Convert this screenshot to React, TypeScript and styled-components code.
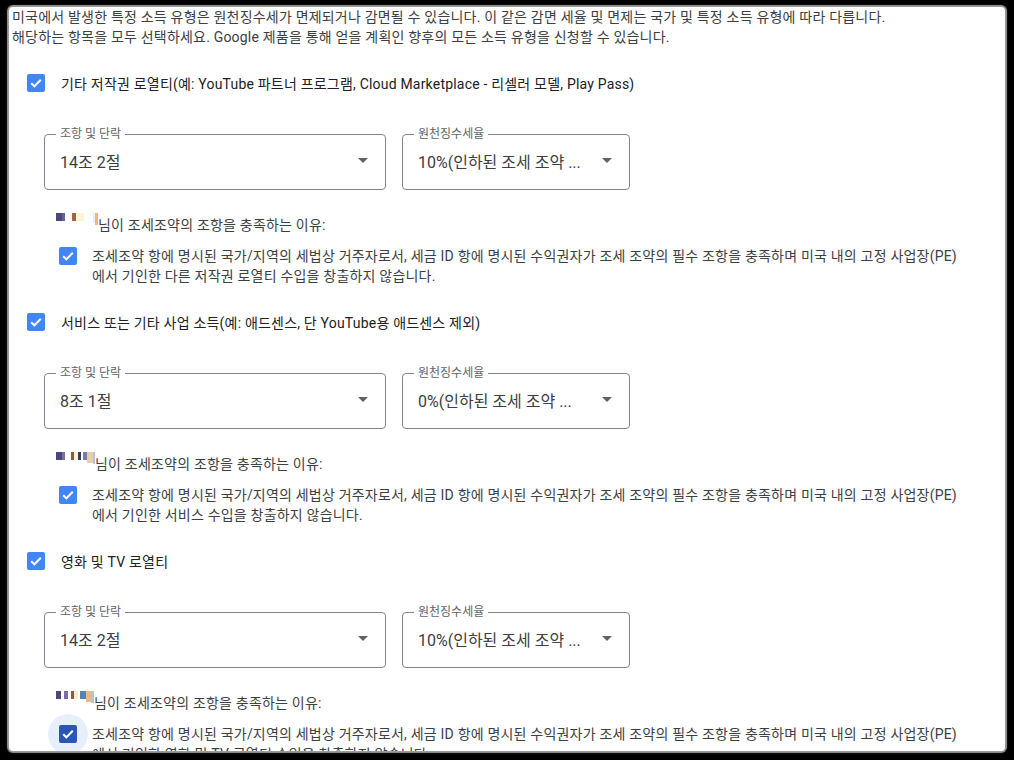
import React from 'react'
import styled, { createGlobalStyle } from 'styled-components'

const GlobalStyle = createGlobalStyle`
  html, body {
    margin: 0;
    padding: 0;
    background: #000;
  }
  body {
    font-family: Roboto, 'Noto Sans CJK KR', 'Noto Sans', sans-serif;
    -webkit-font-smoothing: antialiased;
  }
`

const Frame = styled.div`
  padding: 7px 9px 0 9px;
  height: 760px;
  box-sizing: border-box;
`

const Panel = styled.div`
  width: 996px;
  height: 744px;
  background: #fff;
  border-radius: 4px;
  box-shadow: 0 0 1px 2px #9a9a9a;
  overflow: hidden;
  padding-left: 3px;
  box-sizing: border-box;
`

const Intro = styled.p`
  margin: 0;
  font-size: 14px;
  line-height: 20px;
  color: #3c4043;
  letter-spacing: 0.2px;
`

const Section = styled.div`
  padding-left: 15px;
  margin-top: 16px;
`

const Header = styled.label`
  display: flex;
  align-items: center;
  gap: 16px;
  height: 40px;
  font-size: 14px;
  letter-spacing: 0.2px;
  color: #202124;
`

const CheckWrap = styled.span<{ $focus?: boolean }>`
  position: relative;
  flex: none;
  width: 18px;
  height: 18px;

  &::before {
    content: '';
    display: ${({ $focus }) => ($focus ? 'block' : 'none')};
    position: absolute;
    left: -11px;
    top: -11px;
    width: 40px;
    height: 40px;
    border-radius: 50%;
    background: #e8effc;
  }
`

const Box = styled.span<{ $dark?: boolean }>`
  position: relative;
  width: 18px;
  height: 18px;
  border-radius: 2px;
  background: ${({ $dark }) => ($dark ? '#2a56b8' : '#4285f4')};
  display: flex;
  align-items: center;
  justify-content: center;
`

const SelectRow = styled.div`
  display: flex;
  gap: 16px;
  margin: 31px 0 0 17px;
`

const Select = styled.div<{ $w: number }>`
  position: relative;
  width: ${({ $w }) => $w}px;
  height: 56px;
  box-sizing: border-box;
  border: 1px solid #80868b;
  border-radius: 4px;
  display: flex;
  align-items: center;
  padding: 0 17px 3px 15px;
`

const SelectLabel = styled.span`
  position: absolute;
  top: -9px;
  left: 11px;
  padding: 0 4px;
  background: #fff;
  font-size: 12px;
  line-height: 16px;
  color: #5f6368;
`

const SelectValue = styled.span`
  flex: 1;
  font-size: 16px;
  color: #3c4043;
  white-space: nowrap;
  overflow: hidden;
`

const Arrow = styled.span`
  width: 0;
  height: 0;
  border-left: 5px solid transparent;
  border-right: 5px solid transparent;
  border-top: 5px solid #5f6368;
`

const Reason = styled.div`
  display: flex;
  align-items: center;
  margin: 24px 0 0 29px;
  height: 20px;
  font-size: 14px;
  letter-spacing: 0.2px;
  color: #3c4043;
`

const Pixels = styled.span`
  display: inline-flex;
  align-items: flex-start;
  align-self: flex-start;
  margin-top: -1px;
  height: 14px;
`

const Px = styled.span<{ $c: string; $w: number; $h?: number }>`
  display: inline-block;
  width: ${({ $w }) => $w}px;
  height: ${({ $h }) => $h ?? 8}px;
  background: ${({ $c }) => $c};
`

const Confirm = styled.label`
  display: flex;
  align-items: flex-start;
  gap: 15px;
  margin: 12px 0 0 32px;
  font-size: 14px;
  line-height: 20px;
  letter-spacing: 0.2px;
  color: #3c4043;

  ${CheckWrap} {
    margin-top: 1px;
  }
`

const ConfirmText = styled.span`
  width: 890px;
`

const Check = () => (
  <svg width="14" height="14" viewBox="0 0 14 14">
    <path d="M2.2 7.2 L5.4 10.3 L11.8 3.8" fill="none" stroke="#fff" strokeWidth="2" />
  </svg>
)

type Block = [string, number, number?]

const redactions: Block[][] = [
  [['#4a4878', 6], ['#6c5c9a', 3], ['#fff', 7], ['#a36443', 4], ['#fbf5d8', 8], ['#fff', 9], ['#e3f3f8', 2, 10], ['#f4b57a', 3, 12]],
  [['#4a4878', 6], ['#7a6fa0', 3], ['#fff', 6], ['#8a5a3e', 3], ['#fbf5d8', 4], ['#3b3b5a', 3], ['#fff', 2], ['#6d7fa8', 4], ['#e8cfa8', 6, 11], ['#b9c3d8', 2, 12]],
  [['#4a4878', 5], ['#fff', 3], ['#7a6fa0', 4], ['#fff', 3], ['#8a5a3e', 3], ['#f7ecd0', 4], ['#fff', 2], ['#5d7fb0', 6], ['#e8b98a', 5, 11], ['#b9c3d8', 3, 12]],
]

const sections = [
  {
    title: '기타 저작권 로열티(예: YouTube 파트너 프로그램, Cloud Marketplace - 리셀러 모델, Play Pass)',
    article: '14조 2절',
    rate: '10%(인하된 조세 조약 ...',
    income: '다른 저작권 로열티 수입을',
  },
  {
    title: '서비스 또는 기타 사업 소득(예: 애드센스, 단 YouTube용 애드센스 제외)',
    article: '8조 1절',
    rate: '0%(인하된 조세 조약 ...',
    income: '서비스 수입을',
  },
  {
    title: '영화 및 TV 로열티',
    article: '14조 2절',
    rate: '10%(인하된 조세 조약 ...',
    income: '영화 및 TV 로열티 수입을',
  },
]

export default function App() {
  return (
    <>
      <GlobalStyle />
      <Frame>
        <Panel>
          <Intro>
            미국에서 발생한 특정 소득 유형은 원천징수세가 면제되거나 감면될 수 있습니다. 이 같은 감면 세율 및 면제는 국가 및 특정 소득 유형에 따라 다릅니다.
            <br />
            해당하는 항목을 모두 선택하세요. Google 제품을 통해 얻을 계획인 향후의 모든 소득 유형을 신청할 수 있습니다.
          </Intro>
          {sections.map((s, i) => (
            <Section key={i}>
              <Header>
                <CheckWrap>
                  <Box>
                    <Check />
                  </Box>
                </CheckWrap>
                {s.title}
              </Header>
              <SelectRow>
                <Select $w={342}>
                  <SelectLabel>조항 및 단락</SelectLabel>
                  <SelectValue>{s.article}</SelectValue>
                  <Arrow />
                </Select>
                <Select $w={228}>
                  <SelectLabel>원천징수세율</SelectLabel>
                  <SelectValue>{s.rate}</SelectValue>
                  <Arrow />
                </Select>
              </SelectRow>
              <Reason>
                <Pixels>
                  {redactions[i].map(([c, w, h], j) => (
                    <Px key={j} $c={c} $w={w} $h={h} />
                  ))}
                </Pixels>
                님이 조세조약의 조항을 충족하는 이유:
              </Reason>
              <Confirm>
                <CheckWrap $focus={i === 2}>
                  <Box $dark={i === 2}>
                    <Check />
                  </Box>
                </CheckWrap>
                <ConfirmText>
                  조세조약 항에 명시된 국가/지역의 세법상 거주자로서, 세금 ID 항에 명시된 수익권자가 조세 조약의 필수 조항을 충족하며 미국 내의 고정 사업장(PE)
                  <br />
                  에서 기인한 {s.income} 창출하지 않습니다.
                </ConfirmText>
              </Confirm>
            </Section>
          ))}
        </Panel>
      </Frame>
    </>
  )
}
